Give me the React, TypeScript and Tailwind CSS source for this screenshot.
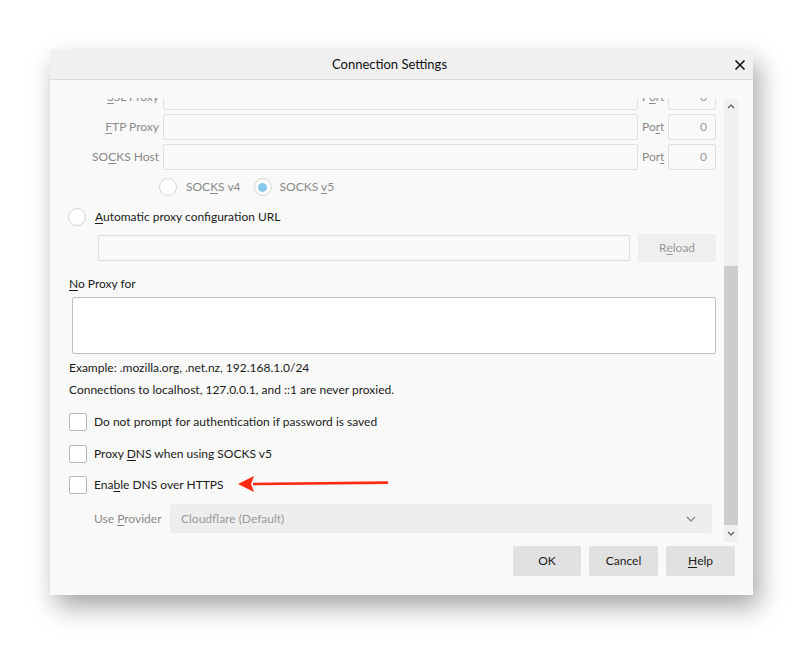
import React from "react";

const U = ({ children }: { children: React.ReactNode }) => (
  <span className="underline underline-offset-2">{children}</span>
);

function Radio({ checked }: { checked?: boolean }) {
  return (
    <span className="flex h-[18px] w-[18px] shrink-0 items-center justify-center rounded-full border border-[#d4d4d4] bg-white">
      {checked && <span className="h-[9px] w-[9px] rounded-full bg-[#8cc8ec]" />}
    </span>
  );
}

function Checkbox() {
  return <div className="h-[18px] w-[18px] shrink-0 rounded-[2px] border border-[#b8b8b8] bg-white" />;
}

function ProxyRow({ label, port }: { label: React.ReactNode; port: React.ReactNode }) {
  return (
    <div className="flex h-[26px] items-center">
      <div className="w-[113px] shrink-0 pr-[4px] text-right text-[#8a8a8a]">{label}</div>
      <div className="h-[26px] w-[475px] rounded-[2px] border border-[#e0e0e0] bg-[#f9f9f9]" />
      <div className="w-[30px] shrink-0 pl-[4px] text-[#8a8a8a]">{port}</div>
      <div className="flex h-[26px] w-[48px] items-center justify-end rounded-[2px] border border-[#e0e0e0] bg-[#f9f9f9] pr-[8px] text-[#9a9a9a]">
        0
      </div>
    </div>
  );
}

export default function App() {
  return (
    <div
      className="h-[645px] w-[803px] overflow-hidden bg-white pl-[50px] pt-[50px] text-[12px] text-[#1b1b1b]"
      style={{ fontFamily: "Lato, 'Noto Sans', sans-serif" }}
    >
      <div className="flex h-[545px] w-[703px] flex-col bg-[#f9f9f9] shadow-[6px_12px_24px_rgba(0,0,0,0.35)]">
        {/* Title bar */}
        <div className="relative flex h-[30px] shrink-0 items-center justify-center border-b border-[#dadada] bg-[#f0f0f0] pr-[24px]">
          <span className="text-[13px] text-[#111]">Connection Settings</span>
          <svg className="absolute right-[7px] top-[9px]" width="12" height="12" viewBox="0 0 12 12">
            <path d="M1.5 1.5 L10.5 10.5 M10.5 1.5 L1.5 10.5" stroke="#111" strokeWidth="1.6" />
          </svg>
        </div>

        {/* Body */}
        <div className="flex flex-1 flex-col pt-[18px]">
          <div className="flex h-[444px]">
            <div className="h-[444px] w-[674px] overflow-hidden">
              <div className="-mt-[14px] flex flex-col">
                <div className="flex flex-col gap-[4px]">
                  <ProxyRow label={<><U>S</U>SL Proxy</>} port={<>P<U>o</U>rt</>} />
                  <ProxyRow label={<><U>F</U>TP Proxy</>} port={<>Po<U>r</U>t</>} />
                  <ProxyRow label={<>SO<U>C</U>KS Host</>} port={<>Por<U>t</U></>} />
                </div>
                <div className="mt-[8px] flex h-[18px] items-center pl-[109px] text-[#8a8a8a]">
                  <Radio />
                  <span className="ml-[9px]">
                    SOC<U>K</U>S v4
                  </span>
                  <span className="ml-[13px]">
                    <Radio checked />
                  </span>
                  <span className="ml-[8px]">
                    SOCKS <U>v</U>5
                  </span>
                </div>
                <div className="mt-[12px] flex h-[18px] items-center pl-[18px]">
                  <Radio />
                  <span className="ml-[9px]">
                    <U>A</U>utomatic proxy configuration URL
                  </span>
                </div>
                <div className="mt-[8px] flex h-[28px] items-center pl-[48px]">
                  <div className="h-[26px] w-[532px] rounded-[2px] border border-[#dcdcdc] bg-[#f9f9f9]" />
                  <div className="ml-[8px] flex h-[28px] w-[78px] items-center justify-center rounded-[2px] bg-[#efefef] text-[#9a9a9a]">
                    R<U>e</U>load
                  </div>
                </div>
                <div className="mt-[14px] pl-[19px] leading-[16px]">
                  <U>N</U>o Proxy for
                </div>
                <div className="ml-[22px] mt-[5px] h-[57px] w-[644px] rounded-[2px] border border-[#bdbdbd] bg-white" />
                <div className="mt-[6px] pl-[19px] leading-[16px]">Example: .mozilla.org, .net.nz, 192.168.1.0/24</div>
                <div className="mt-[6px] pl-[19px] leading-[16px]">Connections to localhost, 127.0.0.1, and ::1 are never proxied.</div>
                <div className="mt-[15px] flex flex-col pl-[19px]">
                  <div className="flex h-[18px] items-center">
                    <Checkbox />
                    <span className="ml-[7px]">
                      Do not prompt for authent<U>i</U>cation if password is saved
                    </span>
                  </div>
                  <div className="mt-[14px] flex h-[18px] items-center">
                    <Checkbox />
                    <span className="ml-[7px]">
                      Proxy <U>D</U>NS when using SOCKS v5
                    </span>
                  </div>
                  <div className="relative mt-[13px] flex h-[18px] items-center">
                    <Checkbox />
                    <span className="ml-[7px]">
                      Ena<U>b</U>le DNS over HTTPS
                    </span>
                    <svg className="absolute left-[169px] top-[-2px]" width="152" height="20" viewBox="0 0 152 20">
                      <path d="M16 10 L149 8.6" stroke="#ff2a12" strokeWidth="2.6" strokeLinecap="round" />
                      <path d="M0 10 L16 2 L13 10 L16 18 Z" fill="#ff2a12" />
                    </svg>
                  </div>
                </div>
                <div className="mt-[10px] flex h-[29px] items-center pl-[44px]">
                  <span className="w-[76px] text-[#8a8a8a]">
                    Use <U>P</U>rovider
                  </span>
                  <div className="flex h-[29px] w-[542px] items-center justify-between rounded-[2px] bg-[#eeeeee] pl-[11px] pr-[16px] text-[#9a9a9a]">
                    <span>Cloudflare (Default)</span>
                    <svg width="10" height="6" viewBox="0 0 10 6">
                      <path d="M1 1 L5 5 L9 1" stroke="#8a8a8a" strokeWidth="1.4" fill="none" />
                    </svg>
                  </div>
                </div>
              </div>
            </div>
            {/* Scrollbar */}
            <div className="relative mt-[1px] flex h-[443px] w-[14px] flex-col bg-[#f0f0f0]">
              <div className="flex h-[14px] items-center justify-center">
                <svg width="8" height="5" viewBox="0 0 8 5">
                  <path d="M1 4 L4 1 L7 4" stroke="#555" strokeWidth="1.2" fill="none" />
                </svg>
              </div>
              <div className="mt-[153px] h-[259px] w-[14px] bg-[#cdcdcd]" />
              <div className="flex h-[17px] items-center justify-center">
                <svg width="8" height="5" viewBox="0 0 8 5">
                  <path d="M1 1 L4 4 L7 1" stroke="#555" strokeWidth="1.2" fill="none" />
                </svg>
              </div>
            </div>
          </div>

          {/* Buttons */}
          <div className="mt-[4px] flex justify-end gap-[8px] pr-[18px]">
            <div className="flex h-[30px] w-[68px] items-center justify-center rounded-[2px] bg-[#e1e1e1]">OK</div>
            <div className="flex h-[30px] w-[69px] items-center justify-center rounded-[2px] bg-[#e1e1e1]">Cancel</div>
            <div className="flex h-[30px] w-[69px] items-center justify-center rounded-[2px] bg-[#e1e1e1]">
              <U>H</U>elp
            </div>
          </div>
        </div>
      </div>
    </div>
  );
}
